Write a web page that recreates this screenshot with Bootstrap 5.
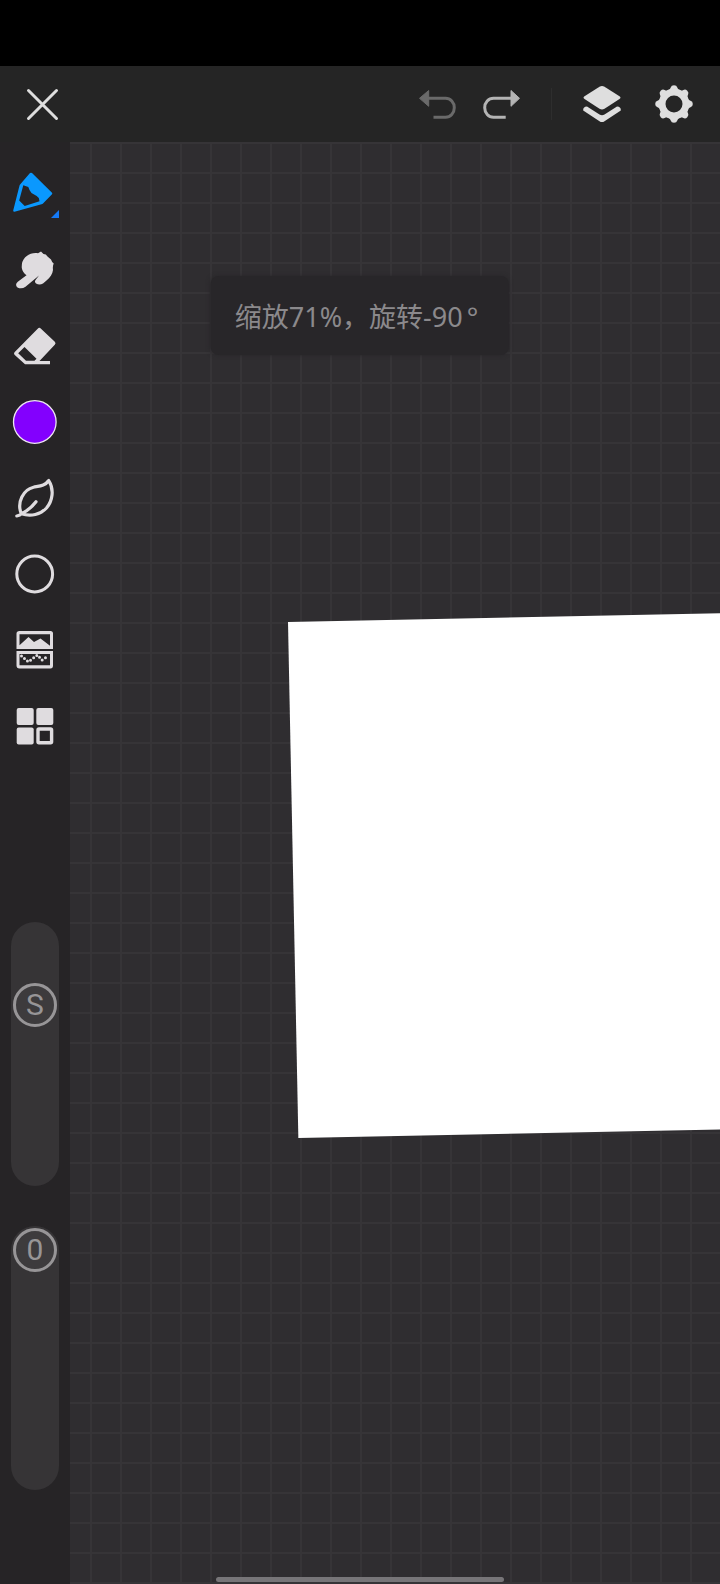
<!DOCTYPE html>
<html lang="zh-CN">
<head>
<meta charset="utf-8">
<meta name="viewport" content="width=device-width, initial-scale=1">
<title>画板</title>
<link href="https://cdn.jsdelivr.net/npm/bootstrap@5.3.0/dist/css/bootstrap.min.css" rel="stylesheet">
<style>
  body { background: #000; font-family: "Noto Sans", "Noto Sans CJK SC", sans-serif; }
  .status-area { height: 66px; background: #000; }
  .top-bar { height: 76px; background: #252525; padding-right: 14px; }
  .tool-btn { display: block; border: 0; padding: 0; background: none; color: #dfdcdf; line-height: 0; }
  .top-bar .tool-btn { width: 64px; height: 76px; color: #dedede; }
  .top-bar .close-btn { width: 84px; }
  .top-bar .undo-btn { color: #6a6a6a; }
  .top-bar .redo-btn { color: #b4b4b4; }
  .separator { width: 1px; height: 32px; margin: 0 18px; background: #2e2e2e; }
  .side-bar { width: 70px; padding-top: 14px; background: #262426; }
  .side-bar .tool-btn { width: 70px; height: 76px; }
  .side-bar .pen-btn { color: #0a98fe; }
  .sliders { margin-top: 158px; gap: 40px; }
  .v-slider { width: 48px; height: 264px; border-radius: 24px; background: #363436; }
  .v-slider input { opacity: 0; writing-mode: vertical-lr; cursor: pointer; }
  .knob { width: 44px; height: 44px; left: 2px; border: 3px solid #979597; border-radius: 50%; background: #3d3b3d;
          color: #979597; font: 400 30px/38px Roboto, sans-serif; text-align: center; pointer-events: none; }
  .canvas-area {
    background-color: #2f2d30;
    background-image: linear-gradient(90deg, #363437 2px, transparent 2px), linear-gradient(#363437 2px, transparent 2px);
    background-size: 30px 30px; background-position: 20px 0;
  }
  .paper { left: 218px; top: 480px; width: 1000px; height: 516px; background: #fff; transform: rotate(-1.15deg); transform-origin: 0 0; }
  .hint { top: 134px; padding: 22px 24px 19px; border-radius: 8px; background: #282629; color: #8b898c;
          font-size: 27px; line-height: 38px; white-space: nowrap; box-shadow: 0 0 4px #282629; }
  .degree { margin: 0 7px 0 4px; }
  .home-bar { width: 40%; height: 5px; bottom: 2px; border-radius: 3px; background: #777578; }
</style>
</head>
<body>
<div class="d-flex flex-column min-vh-100">
  <div class="status-area flex-shrink-0"></div>

  <header class="top-bar d-flex align-items-center flex-shrink-0">
    <button class="tool-btn close-btn me-auto" type="button" aria-label="关闭">
      <svg width="84" height="76" fill="none" stroke="currentColor" stroke-width="3" stroke-linecap="round"><path d="M28.500 24.500 56.500 52.500M56.500 24.500 28.500 52.500"/></svg>
    </button>
    <button class="tool-btn undo-btn" type="button" aria-label="撤销">
      <svg width="64" height="76"><path d="M14.500 32.300 23.700 24.500V40.300Z" fill="currentColor" stroke="currentColor" stroke-linejoin="round"/><path d="M23 32.300H40.500C45.500 32.300 49.300 36.500 49.300 41.800S45.500 51.300 40.500 51.300H28.500" fill="none" stroke="currentColor" stroke-width="3"/></svg>
    </button>
    <button class="tool-btn redo-btn" type="button" aria-label="重做">
      <svg width="64" height="76"><path d="M50.500 32.300 42 24.500V40.300Z" fill="currentColor" stroke="currentColor" stroke-linejoin="round"/><path d="M42 32.300H24.500C19.500 32.300 15.700 36.500 15.700 41.800S19.500 51.300 24.500 51.300H36.700" fill="none" stroke="currentColor" stroke-width="3"/></svg>
    </button>
    <div class="separator"></div>
    <button class="tool-btn me-2" type="button" aria-label="图层">
      <svg width="64" height="76" fill="currentColor"><path d="M29.500 20.800Q32 19.400 34.500 20.800L49.500 30.300Q51.500 31.700 49.500 33.100L34.500 42.700Q32 44.100 29.500 42.700L14.500 33.100Q12.500 31.700 14.500 30.300Z"/><path d="M17 40.500 29.500 48.500Q32 49.800 34.500 48.500L47 40.500Q51.200 40.800 50.800 44.500L34.500 55.200Q32 56.900 29.500 55.200L13.200 44.500Q12.800 40.800 17 40.500Z"/></svg>
    </button>
    <button class="tool-btn" type="button" aria-label="设置">
      <svg width="64" height="76" fill="currentColor"><defs><path id="tooth" d="M26 24.300Q28.300 23.800 28.700 21.500 29.300 19.200 32 19.200T35.300 21.500Q35.700 23.800 38 24.300V28H26Z"/></defs>
        <circle cx="32" cy="38" r="11.900" fill="none" stroke="currentColor" stroke-width="6.800"/>
        <use href="#tooth"/><use href="#tooth" transform="rotate(45 32 38)"/><use href="#tooth" transform="rotate(90 32 38)"/><use href="#tooth" transform="rotate(135 32 38)"/><use href="#tooth" transform="rotate(180 32 38)"/><use href="#tooth" transform="rotate(225 32 38)"/><use href="#tooth" transform="rotate(270 32 38)"/><use href="#tooth" transform="rotate(315 32 38)"/></svg>
    </button>
  </header>

  <main class="d-flex flex-grow-1 position-relative overflow-hidden">
    <nav class="side-bar d-flex flex-column flex-shrink-0" aria-label="工具">
      <button class="tool-btn pen-btn" type="button" aria-label="画笔">
        <svg width="70" height="76" fill="currentColor"><path fill-rule="evenodd" d="M30 17Q31 16.300 32 17L52 36.700Q52.600 37.500 52 38.300L43 47.500Q42.500 48 41.500 48.300L14.500 55.800Q13 55.800 13.200 54.500L19.400 30Q19.600 29 20.300 28.300ZM23.300 29.300 19.200 44.500 24.700 50 39.500 45.200 38.800 42 36.700 40 31.500 37 29.500 34 28.300 31Z"/><path fill="#1479f5" d="M59 54V62H51Z"/></svg>
      </button>
      <button class="tool-btn" type="button" aria-label="涂抹">
        <svg width="70" height="76" fill="currentColor"><path d="M21.800 36Q21.300 29.500 25 25.500C28 22.300 33 20.500 38 21.300L41 19.600 43.500 22Q46.500 22 47.500 24.500L51 27.500Q51.500 29.500 53.700 31.500 52.500 34 53 38C52.500 42 50 46 46.500 48.500L43 51.500Q39.500 53.500 36 51.500 33.700 49.500 36.500 46.800L39 43.500 25.500 54.800Q21.500 57.500 17.500 55.500 14.500 52.500 17.800 49.800L26.500 43.300Q22.500 40.500 21.800 36Z"/></svg>
      </button>
      <button class="tool-btn" type="button" aria-label="橡皮擦">
        <svg width="70" height="76" fill="currentColor"><path fill-rule="evenodd" d="M37.700 20.700Q39.300 19 41 20.700L54.800 33.800Q56.300 35.300 54.800 36.800L39.500 53H50V56.300H25L14.500 46.800Q13.500 45.500 14.500 44.200ZM24.500 39 18.200 45.300 26 52.700H34.500L36.500 50.700Z"/></svg>
      </button>
      <button class="tool-btn" type="button" aria-label="颜色">
        <svg width="70" height="76"><circle cx="34.800" cy="38" r="21.300" fill="#8300fe" stroke="#eee5f2" stroke-width="1.300"/></svg>
      </button>
      <button class="tool-btn" type="button" aria-label="笔刷">
        <svg width="70" height="76" fill="none" stroke="currentColor" stroke-width="3.200" stroke-linecap="round" stroke-linejoin="round"><path d="M48.700 20.500C45 26 39.500 26 33.500 27.200C23.500 29.500 16.500 42 21.300 53.800C31 57 40.500 54.500 46.500 48C52.500 41 54.500 29.500 48.700 20.500ZM16.800 56Q20 55.500 21.500 53.700 29.500 50 36 41.700"/></svg>
      </button>
      <button class="tool-btn" type="button" aria-label="形状">
        <svg width="70" height="76"><circle cx="34.700" cy="38" r="17.900" fill="none" stroke="currentColor" stroke-width="3"/></svg>
      </button>
      <button class="tool-btn" type="button" aria-label="图片">
        <svg width="70" height="76" fill="currentColor"><path fill-rule="evenodd" d="M19.500 19H50.500Q53 19 53 21.500V37H16.500V21.500Q16.500 19 19.500 19ZM19.500 22.300V33.300L28.500 25 34 30 40.500 26.500 50 33.800V22.300Z"/><path fill-rule="evenodd" d="M16.500 39H53V53.500Q53 56.500 50.500 56.500H19.500Q16.500 56.500 16.500 53.500ZM19.500 42V53.300H50V42Z"/><path fill="none" stroke="currentColor" stroke-width="3" stroke-linecap="round" stroke-dasharray="0 3.900" d="M21.500 44 28.300 49.800 37.500 43 42 48 47.500 44.500"/></svg>
      </button>
      <button class="tool-btn" type="button" aria-label="更多">
        <svg width="70" height="76" fill="currentColor"><rect x="16.700" y="20" width="17" height="17" rx="2"/><rect x="36.300" y="20" width="17" height="17" rx="2"/><rect x="16.700" y="39.500" width="17" height="17" rx="2"/><rect x="38" y="41" width="13.600" height="13.800" rx="1" fill="none" stroke="currentColor" stroke-width="3.400"/></svg>
      </button>

      <div class="sliders d-flex flex-column align-items-center">
        <div class="v-slider position-relative">
          <input class="w-100 h-100 m-0" id="brush-size" type="range" min="0" max="100" value="28">
          <label class="knob position-absolute" for="brush-size" style="top:61px">S</label>
        </div>
        <div class="v-slider position-relative">
          <input class="w-100 h-100 m-0" id="brush-opacity" type="range" min="0" max="100" value="0">
          <label class="knob position-absolute" for="brush-opacity" style="top:2px">0</label>
        </div>
      </div>
    </nav>

    <section class="canvas-area flex-grow-1 position-relative overflow-hidden" aria-label="画布">
      <div class="paper position-absolute"></div>
    </section>

    <div class="hint position-absolute start-50 translate-middle-x" role="status">缩放71%，旋转-90<span class="degree">°</span></div>
    <div class="home-bar position-absolute start-50 translate-middle-x"></div>
  </main>
</div>
<script src="https://cdn.jsdelivr.net/npm/bootstrap@5.3.0/dist/js/bootstrap.bundle.min.js"></script>
</body>
</html>
